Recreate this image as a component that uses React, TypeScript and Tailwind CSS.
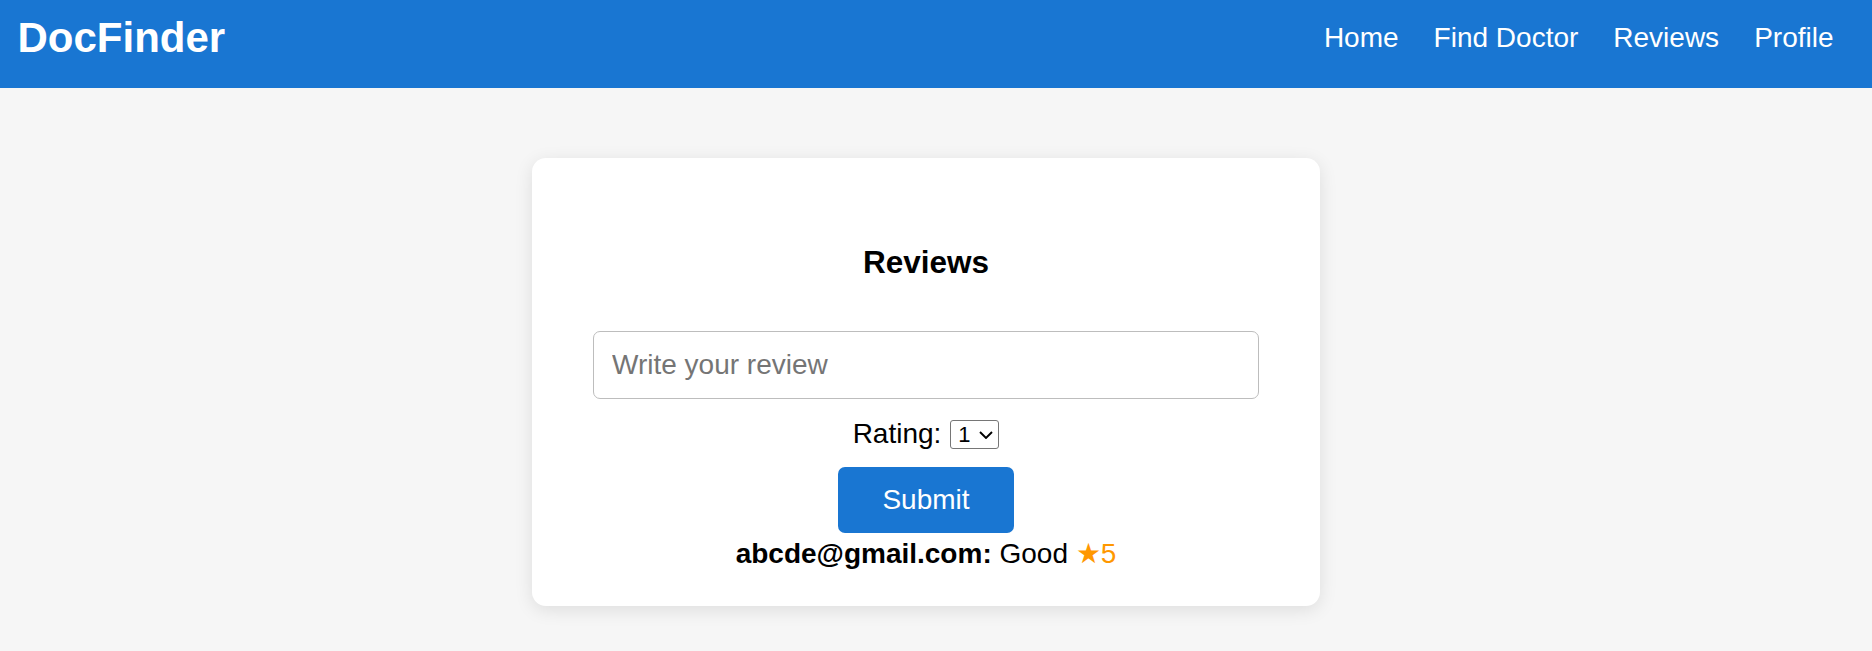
import { useState } from "react";

const reviews = [{ user: "abcde@gmail.com", text: "Good", rating: 5 }];

export default function App() {
  const [rating, setRating] = useState("1");

  return (
    <div className="min-h-screen bg-[#f6f6f6] font-['Liberation_Sans',Arial,sans-serif] text-black">
      <Header />
      <main className="flex justify-center pt-[70px] pr-[20px]">
        <section className="w-[788px] rounded-[14px] bg-white px-[61px] pt-[86px] pb-[36px] shadow-[0_4px_18px_rgba(0,0,0,0.1)]">
          <h2 className="text-center text-[31.5px] font-bold leading-[36px]">Reviews</h2>

          <input
            type="text"
            placeholder="Write your review"
            className="mt-[51px] block h-[68px] w-full rounded-[7px] border-[1.5px] border-[#bdbdbd] px-[18px] text-[28px] outline-none placeholder:text-[#757575]"
          />

          <div className="mt-[19px] flex h-[32px] items-center justify-center text-[28px] leading-[32px]">
            <span>Rating:</span>
            <div className="relative ml-[9px]">
              <select
                value={rating}
                onChange={(e) => setRating(e.target.value)}
                className="block h-[29px] w-[49px] appearance-none rounded-[3px] border border-[#767676] bg-white pl-[7px] pr-[20px] text-[22px] leading-[27px]"
              >
                {[1, 2, 3, 4, 5].map((n) => (
                  <option key={n} value={n}>
                    {n}
                  </option>
                ))}
              </select>
              <svg
                className="pointer-events-none absolute right-[6px] top-[11px]"
                width="14"
                height="8"
                viewBox="0 0 14 8"
                fill="none"
                stroke="#000"
                strokeWidth="1.9"
              >
                <path d="M1 1l6 6 6-6" />
              </svg>
            </div>
          </div>

          <div className="mt-[17px] flex justify-center">
            <button className="h-[66px] rounded-[7px] bg-[#1976d2] px-[44px] text-[28px] text-white">Submit</button>
          </div>

          <div className="mt-[5px]">
            {reviews.map((r) => (
              <p key={r.user} className="text-center text-[28px] leading-[32px]">
                <strong>{r.user}:</strong> {r.text} <span className="text-[#ff9800]">★{r.rating}</span>
              </p>
            ))}
          </div>
        </section>
      </main>
    </div>
  );
}

function Header() {
  return (
    <header className="h-[88px] bg-[#1976d2] pl-[17.5px] pr-[21px] pt-[14px] text-white">
      <div className="flex h-[48px] items-center justify-between">
        <h1 className="text-[42px] font-bold leading-[48px]">DocFinder</h1>
        <nav className="flex text-[28px] leading-[32px]">
          {["Home", "Find Doctor", "Reviews", "Profile"].map((l) => (
            <a key={l} href="#" className="px-[17.5px]">
              {l}
            </a>
          ))}
        </nav>
      </div>
    </header>
  );
}
